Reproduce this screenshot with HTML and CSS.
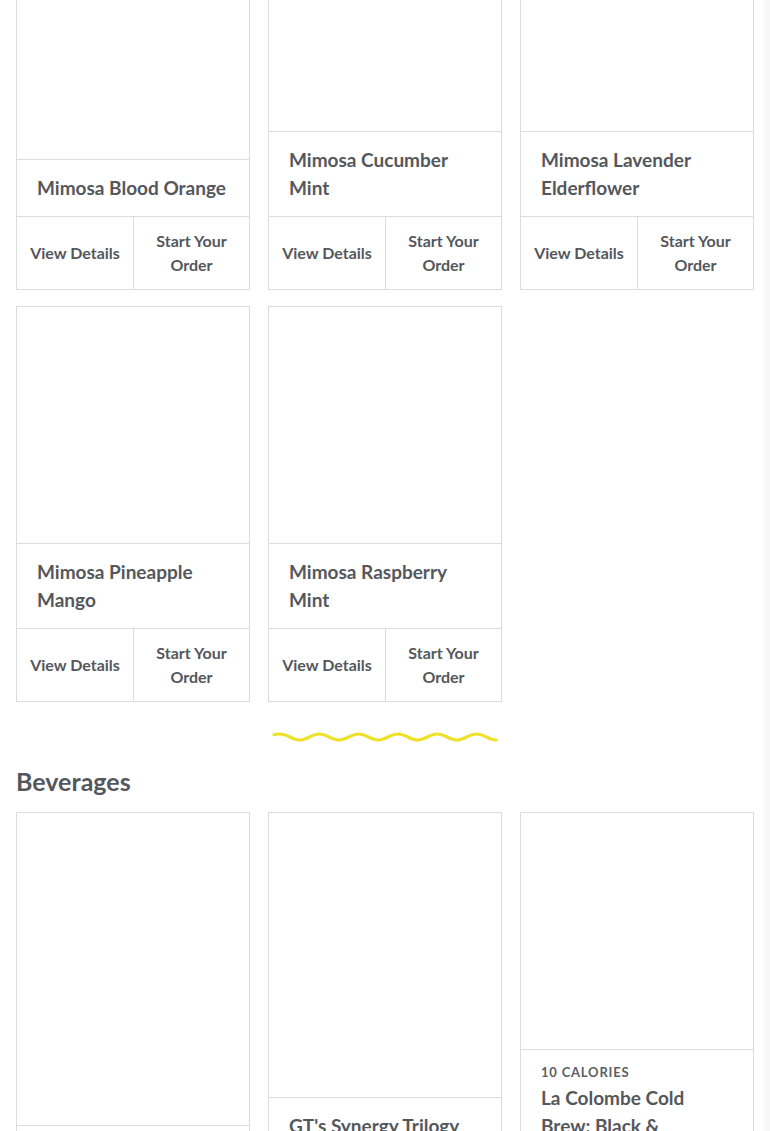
FILE: index.html
```html
<!DOCTYPE html>
<html lang="en">
<head>
<meta charset="utf-8">
<title>Menu</title>
<link rel="stylesheet" href="styles.css">
</head>
<body>
<div class="page">
  <section class="section section-first">
    <div class="grid">
      <article class="card">
        <div class="card-image"></div>
        <div class="card-info"><h3 class="card-name">Mimosa Blood Orange</h3></div>
        <div class="card-actions"><a class="btn">View Details</a><a class="btn">Start Your Order</a></div>
      </article>
      <article class="card">
        <div class="card-image"></div>
        <div class="card-info"><h3 class="card-name">Mimosa Cucumber Mint</h3></div>
        <div class="card-actions"><a class="btn">View Details</a><a class="btn">Start Your Order</a></div>
      </article>
      <article class="card">
        <div class="card-image"></div>
        <div class="card-info"><h3 class="card-name">Mimosa Lavender Elderflower</h3></div>
        <div class="card-actions"><a class="btn">View Details</a><a class="btn">Start Your Order</a></div>
      </article>
      <article class="card">
        <div class="card-image"></div>
        <div class="card-info"><h3 class="card-name">Mimosa Pineapple Mango</h3></div>
        <div class="card-actions"><a class="btn">View Details</a><a class="btn">Start Your Order</a></div>
      </article>
      <article class="card">
        <div class="card-image"></div>
        <div class="card-info"><h3 class="card-name">Mimosa Raspberry Mint</h3></div>
        <div class="card-actions"><a class="btn">View Details</a><a class="btn">Start Your Order</a></div>
      </article>
    </div>
  </section>

  <div class="divider">
    <svg class="squiggle" width="226" height="14" viewBox="0 0 226 14" aria-hidden="true">
      <path d="M2 4.6 Q5 4 8 4 C15.07 4 20.58 10 27.65 10 S40.23 4 47.3 4 S59.88 10 66.95 10 S79.53 4 86.6 4 S99.18 10 106.25 10 S118.83 4 125.9 4 S138.48 10 145.55 10 S158.13 4 165.2 4 S177.78 10 184.85 10 S197.43 4 204.5 4 S217.08 10 224.15 10" fill="none" stroke="#efe02a" stroke-width="3.2" stroke-linecap="round"/>
    </svg>
  </div>

  <section class="section">
    <h2 class="section-title">Beverages</h2>
    <div class="grid">
      <article class="card">
        <div class="card-image"></div>
        <div class="card-info"><h3 class="card-name">Coca-Cola</h3></div>
        <div class="card-actions"><a class="btn">View Details</a><a class="btn">Start Your Order</a></div>
      </article>
      <article class="card">
        <div class="card-image"></div>
        <div class="card-info"><h3 class="card-name">GT's Synergy Trilogy Kombucha</h3></div>
        <div class="card-actions"><a class="btn">View Details</a><a class="btn">Start Your Order</a></div>
      </article>
      <article class="card">
        <div class="card-image"></div>
        <div class="card-info"><p class="card-cal">10 Calories</p><h3 class="card-name">La Colombe Cold Brew: Black &amp; Unsweetened</h3></div>
        <div class="card-actions"><a class="btn">View Details</a><a class="btn">Start Your Order</a></div>
      </article>
    </div>
  </section>
</div>
<div class="edge-shade"></div>
</body>
</html>
```

FILE: styles.css
```css
html, body {
  margin: 0;
  padding: 0;
  background: #ffffff;
}

body {
  font-family: Lato, "Open Sans", "Liberation Sans", sans-serif;
  color: #54575c;
  overflow: hidden;
}

.page {
  padding: 0 16px;
  margin-top: -106px;
}

.grid {
  display: grid;
  grid-template-columns: repeat(3, 234px);
  column-gap: 18px;
  row-gap: 16px;
}

.card {
  display: flex;
  flex-direction: column;
  border: 1px solid #dcdcdc;
  background: #fff;
}

.card-image {
  flex: 1 0 236px;
  min-height: 236px;
  border-bottom: 1px solid #dcdcdc;
}

.card-info {
  padding: 14px 20px 14px 20px;
  border-bottom: 1px solid #dcdcdc;
}

.card-name {
  margin: 0;
  font-size: 19px;
  line-height: 28px;
  font-weight: 700;
  color: #54575c;
}

.card-cal {
  margin: 0 0 4px;
  font-size: 13px;
  line-height: 16px;
  font-weight: 700;
  letter-spacing: 0.8px;
  text-transform: uppercase;
  color: #5b5e63;
}

.card-actions {
  display: grid;
  grid-template-columns: 1fr 1fr;
}

.btn {
  display: flex;
  align-items: center;
  justify-content: center;
  text-align: center;
  padding: 12px 3px;
  font-size: 16px;
  line-height: 24px;
  font-weight: 700;
  color: #54575c;
}

.btn + .btn {
  border-left: 1px solid #dcdcdc;
  padding: 12px 14px;
}

.divider {
  display: flex;
  justify-content: center;
  padding: 28px 0 21px;
}

.squiggle {
  display: block;
}

.section-title {
  margin: 0 0 15px;
  font-size: 25px;
  line-height: 32px;
  font-weight: 700;
  color: #54575c;
}

.edge-shade {
  position: fixed;
  top: 0;
  right: 0;
  width: 10px;
  height: 100%;
  background: linear-gradient(to right, rgba(0,0,0,0), rgba(0,0,0,0.035));
  pointer-events: none;
}
```
